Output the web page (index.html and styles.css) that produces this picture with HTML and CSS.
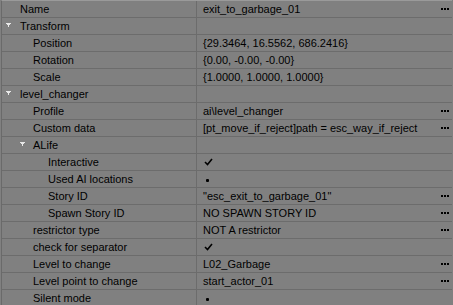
FILE: index.html
```html
<!DOCTYPE html>
<html lang="en">
  <head>
    <meta charset="UTF-8" />
    <title>Properties</title>
    <link rel="stylesheet" href="styles.css">
  </head>
  <body>
    <div class="props">
      <div class="row">
        <div class="key l0">Name</div>
        <div class="val">exit_to_garbage_01<span class="more"><i></i><i></i><i></i></span></div>
      </div>
      <div class="row">
        <div class="key l0"><span class="tog"><svg width="5" height="5" viewBox="0 0 5 5"><path d="M0 0h5v1h-1v1h-1v2h-1v-2h-1v-1h-1z" fill="#e8e8e8"/></svg></span>Transform</div>
        <div class="val"></div>
      </div>
      <div class="row">
        <div class="key l1">Position</div>
        <div class="val">{29.3464, 16.5562, 686.2416}</div>
      </div>
      <div class="row">
        <div class="key l1">Rotation</div>
        <div class="val">{0.00, -0.00, -0.00}</div>
      </div>
      <div class="row">
        <div class="key l1">Scale</div>
        <div class="val">{1.0000, 1.0000, 1.0000}</div>
      </div>
      <div class="row">
        <div class="key l0"><span class="tog"><svg width="5" height="5" viewBox="0 0 5 5"><path d="M0 0h5v1h-1v1h-1v2h-1v-2h-1v-1h-1z" fill="#e8e8e8"/></svg></span>level_changer</div>
        <div class="val"></div>
      </div>
      <div class="row">
        <div class="key l1">Profile</div>
        <div class="val">ai\level_changer<span class="more"><i></i><i></i><i></i></span></div>
      </div>
      <div class="row">
        <div class="key l1">Custom data</div>
        <div class="val">[pt_move_if_reject]path = esc_way_if_reject<span class="more"><i></i><i></i><i></i></span></div>
      </div>
      <div class="row">
        <div class="key l1"><span class="tog"><svg width="5" height="5" viewBox="0 0 5 5"><path d="M0 0h5v1h-1v1h-1v2h-1v-2h-1v-1h-1z" fill="#e8e8e8"/></svg></span>ALife</div>
        <div class="val"></div>
      </div>
      <div class="row">
        <div class="key l2">Interactive</div>
        <div class="val"><svg class="check" width="9" height="8" viewBox="0 0 9 8"><path d="M1 4l2.5 2.5L8 1" fill="none" stroke="#000" stroke-width="1.6"/></svg></div>
      </div>
      <div class="row">
        <div class="key l2">Used AI locations</div>
        <div class="val"><span class="dot"></span></div>
      </div>
      <div class="row">
        <div class="key l2">Story ID</div>
        <div class="val">"esc_exit_to_garbage_01"<span class="more"><i></i><i></i><i></i></span></div>
      </div>
      <div class="row">
        <div class="key l2">Spawn Story ID</div>
        <div class="val">NO SPAWN STORY ID<span class="more"><i></i><i></i><i></i></span></div>
      </div>
      <div class="row">
        <div class="key l1">restrictor type</div>
        <div class="val">NOT A restrictor<span class="more"><i></i><i></i><i></i></span></div>
      </div>
      <div class="row">
        <div class="key l1">check for separator</div>
        <div class="val"><svg class="check" width="9" height="8" viewBox="0 0 9 8"><path d="M1 4l2.5 2.5L8 1" fill="none" stroke="#000" stroke-width="1.6"/></svg></div>
      </div>
      <div class="row">
        <div class="key l1">Level to change</div>
        <div class="val">L02_Garbage<span class="more"><i></i><i></i><i></i></span></div>
      </div>
      <div class="row">
        <div class="key l1">Level point to change</div>
        <div class="val">start_actor_01<span class="more"><i></i><i></i><i></i></span></div>
      </div>
      <div class="row">
        <div class="key l1">Silent mode</div>
        <div class="val"><span class="dot"></span></div>
      </div>
    </div>
  </body>
</html>
```
FILE: styles.css
```css
body {
  margin: 0;
  background-color: #808080;
  font-family: "Liberation Sans", Arial, sans-serif;
  font-size: 11px;
  color: #000;
  height: 305px;
  overflow: hidden;
}
.props {
  border-top: 1px solid #9a9a9a;
  border-left: 1px solid #6a6a6a;
  margin-left: 1px;
  width: 450px;
}
.row {
  display: grid;
  grid-template-columns: 195px 1fr;
  height: 16px;
  border-bottom: 1px solid #6c6c6c;
}
.key {
  display: flex;
  align-items: center;
  border-right: 1px solid #6c6c6c;
  white-space: nowrap;
  position: relative;
}
.l0 {
  padding-left: 18px;
}
.l1 {
  padding-left: 31px;
}
.l2 {
  padding-left: 46px;
}
.tog {
  position: absolute;
  top: 5px;
  left: 4px;
  display: flex;
}
.l1 .tog {
  left: 18px;
}
.val {
  display: flex;
  align-items: center;
  padding-left: 6px;
  white-space: nowrap;
  position: relative;
}
.more {
  margin-left: auto;
  margin-right: 3px;
  display: flex;
  gap: 1px;
}
.more i {
  display: block;
  width: 2px;
  height: 2px;
  background-color: #000;
}
.check {
  margin-left: 1px;
}
.dot {
  display: block;
  width: 3px;
  height: 3px;
  border-radius: 1px;
  background-color: #000;
  margin-left: 3px;
  margin-top: 2px;
}
```
